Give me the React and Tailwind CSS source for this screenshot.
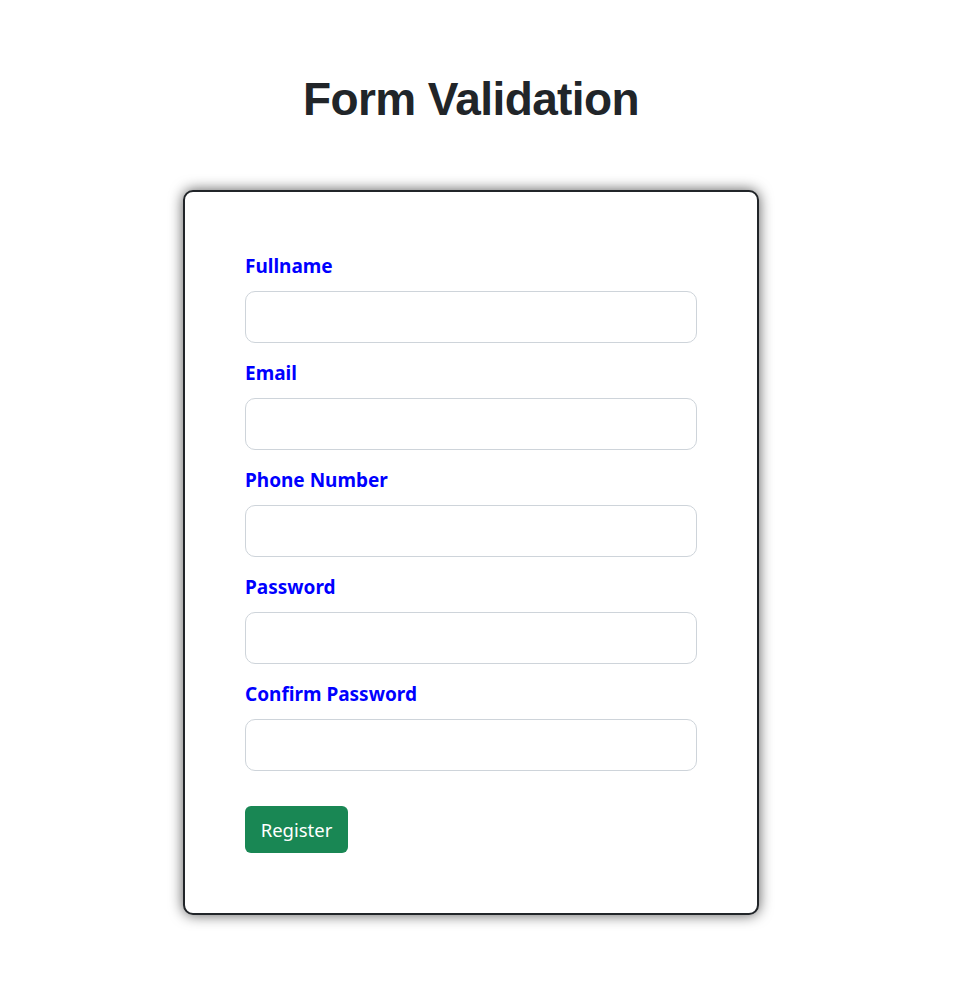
export default function App() {
  const fields = ["Fullname", "Email", "Phone Number", "Password", "Confirm Password"];
  return (
    <div className="min-h-screen bg-white">
      <div className="w-[942px] flex flex-col items-center pt-[72px] pb-[80px]">
        <h1
          className="text-[46px] leading-[55px] font-bold text-[#212529] tracking-[-0.6px]"
          style={{ fontFamily: '"Liberation Sans", Arial, sans-serif' }}
        >
          Form Validation
        </h1>
        <div
          className="mt-[63px] w-[576px] border-2 border-[#212529] rounded-[10px] bg-white shadow-[0_0_14px_rgba(0,0,0,0.65)] p-[60px]"
          style={{ fontFamily: '"Noto Sans", "Open Sans", sans-serif' }}
        >
          <form className="flex flex-col">
            {fields.map((f) => (
              <div key={f} className="mb-4 flex flex-col">
                <label className="text-[19px] leading-[29px] font-bold text-[#0000ff] mb-[10px]">{f}</label>
                <input
                  type={f.includes("Password") ? "password" : "text"}
                  className="h-[52px] w-full border border-[#ced4da] rounded-[10px] px-3 outline-none"
                />
              </div>
            ))}
            <div className="mt-[19px]">
              <button
                type="button"
                className="h-[47px] w-[103px] bg-[#198754] text-white text-[18.5px] rounded-[6px] flex items-center justify-center"
              >
                Register
              </button>
            </div>
          </form>
        </div>
      </div>
    </div>
  );
}
